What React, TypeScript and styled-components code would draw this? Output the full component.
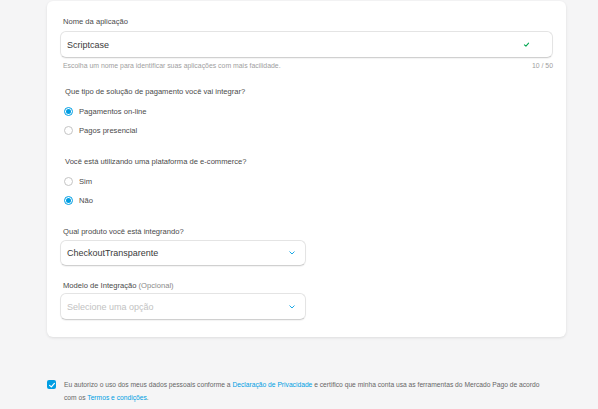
import React from 'react'
import styled, { createGlobalStyle } from 'styled-components'

const GlobalStyle = createGlobalStyle`
  body {
    margin: 0;
    background: #f5f5f6;
    font-family: 'Liberation Sans', Arial, sans-serif;
    color: #444;
  }
`

const Page = styled.div`
  padding: 1px 32px 0 47px;
`

const Card = styled.div`
  width: 519px;
  box-sizing: border-box;
  background: #fff;
  border-radius: 6px;
  box-shadow: 0 1px 3px rgba(0, 0, 0, 0.1);
  padding: 16px 13px 17px;
`

const Label = styled.div<{ $gap?: number }>`
  font-size: 7.6px;
  line-height: 10px;
  color: #4a4a4a;
  padding-left: 3px;
  margin-bottom: ${(p) => p.$gap ?? 4}px;
`

const Muted = styled.span`
  color: #8a8a8a;
`

const Field = styled.div<{ $width?: string; $height?: number; $padRight?: number }>`
  width: ${(p) => p.$width ?? '100%'};
  height: ${(p) => p.$height ?? 27}px;
  box-sizing: border-box;
  border: 1px solid #e4e4e4;
  border-bottom-color: #d0d0d0;
  border-radius: 6px;
  box-shadow: 0 1px 1px rgba(0, 0, 0, 0.05);
  display: flex;
  align-items: center;
  justify-content: space-between;
  padding: 0 ${(p) => p.$padRight ?? 10}px 0 6px;
`

const FieldText = styled.span<{ $placeholder?: boolean }>`
  font-size: 9px;
  color: ${(p) => (p.$placeholder ? '#c2c2c2' : '#3a3a3a')};
`

const HelperRow = styled.div`
  display: flex;
  justify-content: space-between;
  font-size: 6.9px;
  line-height: 10px;
  color: #a0a0a0;
  margin-top: 3px;
  padding-left: 3px;
`

const Question = styled.div<{ $top: number }>`
  font-size: 7.6px;
  line-height: 10px;
  color: #4a4a4a;
  margin-top: ${(p) => p.$top}px;
  padding-left: 5px;
`

const RadioGroup = styled.div`
  display: flex;
  flex-direction: column;
  gap: 9px;
  margin-top: 9px;
  padding-left: 4px;
`

const RadioRow = styled.label`
  display: flex;
  align-items: center;
  gap: 6px;
  height: 10px;
  font-size: 7.6px;
  color: #4a4a4a;
`

const RadioDot = styled.span<{ $on?: boolean }>`
  width: 9px;
  height: 9px;
  box-sizing: border-box;
  border-radius: 50%;
  border: 1px solid ${(p) => (p.$on ? '#009ee3' : '#c4c4c4')};
  display: flex;
  align-items: center;
  justify-content: center;
  &::after {
    content: '';
    width: 5px;
    height: 5px;
    border-radius: 50%;
    background: ${(p) => (p.$on ? '#009ee3' : 'transparent')};
  }
`

const Block = styled.div<{ $top: number }>`
  margin-top: ${(p) => p.$top}px;
`

const Footer = styled.div`
  display: flex;
  align-items: flex-start;
  gap: 8px;
  margin-top: 41px;
`

const CheckBox = styled.span`
  flex: none;
  width: 9px;
  height: 9px;
  margin-top: 2px;
  border-radius: 2px;
  background: #009ee3;
  display: flex;
  align-items: center;
  justify-content: center;
`

const FooterText = styled.div`
  display: flex;
  flex-direction: column;
  font-size: 6.7px;
  line-height: 13px;
  color: #666;
`

const FooterLine = styled.span`
  white-space: nowrap;
`

const Link = styled.a`
  color: #009ee3;
  text-decoration: none;
`

const Check = ({ color, size }: { color: string; size: number }) => (
  <svg width={size} height={size} viewBox="0 0 10 10" fill="none">
    <path d="M2 5.4 L4.2 7.4 L8 3" stroke={color} strokeWidth="1.5" strokeLinecap="round" strokeLinejoin="round" />
  </svg>
)

const Chevron = () => (
  <svg width="6" height="4" viewBox="0 0 6 4" fill="none">
    <path d="M0.8 0.8 L3 3 L5.2 0.8" stroke="#009ee3" strokeWidth="0.9" strokeLinecap="round" strokeLinejoin="round" />
  </svg>
)

const App: React.FC = () => {
  return (
    <>
      <GlobalStyle />
      <Page>
        <Card>
          <Label>Nome da aplicação</Label>
          <Field $padRight={22}>
            <FieldText>Scriptcase</FieldText>
            <Check color="#00a650" size={7} />
          </Field>
          <HelperRow>
            <span>Escolha um nome para identificar suas aplicações com mais facilidade.</span>
            <span>10 / 50</span>
          </HelperRow>

          <Question $top={16}>Que tipo de solução de pagamento você vai integrar?</Question>
          <RadioGroup>
            <RadioRow>
              <RadioDot $on />
              Pagamentos on-line
            </RadioRow>
            <RadioRow>
              <RadioDot />
              Pagos presencial
            </RadioRow>
          </RadioGroup>

          <Question $top={22}>Você está utilizando uma plataforma de e-commerce?</Question>
          <RadioGroup>
            <RadioRow>
              <RadioDot />
              Sim
            </RadioRow>
            <RadioRow>
              <RadioDot $on />
              Não
            </RadioRow>
          </RadioGroup>

          <Block $top={22}>
            <Label $gap={3}>Qual produto você está integrando?</Label>
            <Field $width="246px" $height={26}>
              <FieldText>CheckoutTransparente</FieldText>
              <Chevron />
            </Field>
          </Block>

          <Block $top={15}>
            <Label $gap={2}>
              Modelo de Integração <Muted>(Opcional)</Muted>
            </Label>
            <Field $width="246px">
              <FieldText $placeholder>Selecione uma opção</FieldText>
              <Chevron />
            </Field>
          </Block>
        </Card>

        <Footer>
          <CheckBox>
            <Check color="#fff" size={8} />
          </CheckBox>
          <FooterText>
            <FooterLine>
              Eu autorizo o uso dos meus dados pessoais conforme a <Link>Declaração de Privacidade</Link> e certifico
              que minha conta usa as ferramentas do Mercado Pago de acordo
            </FooterLine>
            <FooterLine>
              com os <Link>Termos e condições</Link>.
            </FooterLine>
          </FooterText>
        </Footer>
      </Page>
    </>
  )
}

export default App
